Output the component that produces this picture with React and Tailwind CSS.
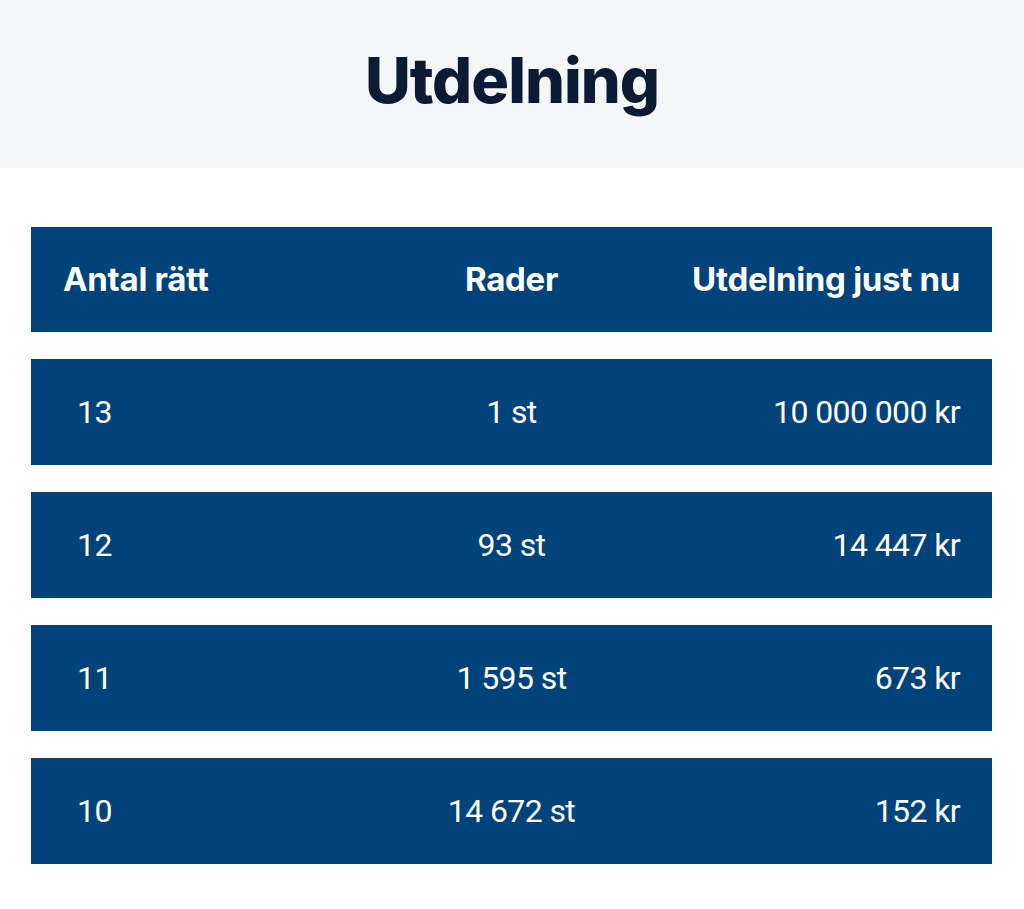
export default function App() {
  const rows = [
    ["13", "1 st", "10 000 000 kr"],
    ["12", "93 st", "14 447 kr"],
    ["11", "1 595 st", "673 kr"],
    ["10", "14 672 st", "152 kr"],
  ];
  return (
    <div className="w-[1024px] h-[909px] bg-white" style={{ fontFamily: "Inter, 'Noto Sans', sans-serif" }}>
      <div className="h-[168px] bg-[#f5f6f8] flex items-center justify-center">
        <h1 className="text-[63px] font-extrabold tracking-[-1px] text-[#0c1a33] leading-none pb-[8px]">Utdelning</h1>
      </div>
      <div className="px-[31px] pt-[59px] flex flex-col gap-[27px] pr-[32px]">
        <div className="h-[105px] bg-[#00437a] grid grid-cols-3 items-center px-8 text-white text-[33px] font-bold tracking-[-0.3px]">
          <div className="whitespace-nowrap">Antal rätt</div>
          <div className="text-center">Rader</div>
          <div className="text-right whitespace-nowrap">Utdelning just nu</div>
        </div>
        {rows.map((r) => (
          <div key={r[0]} className="h-[106px] bg-[#00437a] grid grid-cols-3 items-center px-8 text-white text-[32px] tracking-[-0.6px]" style={{ fontFamily: "Roboto, sans-serif" }}>
            <div className="pl-[14px]">{r[0]}</div>
            <div className="text-center whitespace-nowrap">{r[1]}</div>
            <div className="text-right whitespace-nowrap">{r[2]}</div>
          </div>
        ))}
      </div>
    </div>
  );
}
